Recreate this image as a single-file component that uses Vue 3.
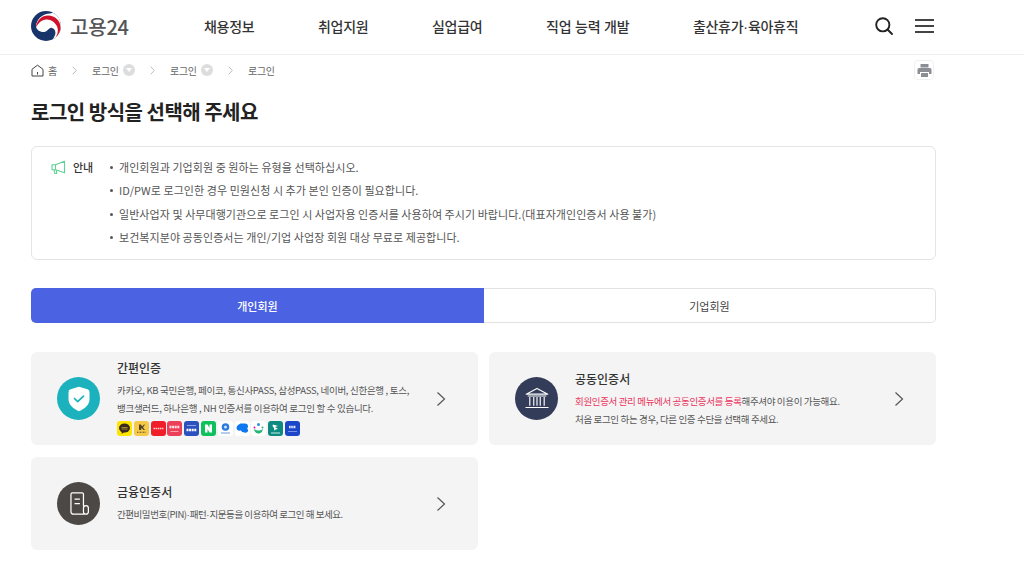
<script setup>
const nav = ['채용정보', '취업지원', '실업급여', '직업 능력 개발']
const crumbs = ['로그인', '로그인', '로그인']
const notes = [
  '개인회원과 기업회원 중 원하는 유형을 선택하십시오.',
  'ID/PW로 로그인한 경우 민원신청 시 추가 본인 인증이 필요합니다.',
  '일반사업자 및 사무대행기관으로 로그인 시 사업자용 인증서를 사용하여 주시기 바랍니다.(대표자개인인증서 사용 불가)',
  '보건복지분야 공동인증서는 개인/기업 사업장 회원 대상 무료로 제공합니다.'
]
</script>

<template>
  <div class="page">
    <header class="top">
      <div class="brand">
        <svg class="logo" viewBox="0 0 30 30" width="30" height="30" aria-hidden="true">
          <circle cx="15" cy="15" r="15" fill="#17356b" />
          <path d="M5 16C5 8 12 2.500 19 2.500l3-.700A15 15 0 0 1 22 28.300L24 24c1-3 0-6-3-7-3-1-4 4-8 4-4 0-7-2-8-5z" fill="#fff" />
          <path d="M5 16.500C5.500 9 11 4.500 17 4.500c7 0 12.500 5 12.500 12 0 4-2 7.500-5 10 2.200-3 3.200-7.500 1.500-11.300C24 11 19.500 7.700 14.500 8.500 10 9.300 7 12.500 5 16.500z" fill="#d0112b" />
        </svg>
        <span class="brand-text">고용24</span>
      </div>
      <nav class="nav">
        <a v-for="item in nav" :key="item">{{ item }}</a>
        <a>출산휴가<span class="dot">·</span>육아휴직</a>
      </nav>
      <div class="top-tools">
        <svg width="20" height="20" viewBox="0 0 20 20" fill="none" stroke="#222" stroke-width="1.900" aria-hidden="true">
          <circle cx="8.800" cy="8.800" r="6.600" />
          <path d="M13.500 13.500 18 18" stroke-linecap="round" />
        </svg>
        <div class="burger"><i></i><i></i><i></i></div>
      </div>
    </header>

    <main class="wrap">
      <div class="crumb-row">
        <div class="crumbs">
          <svg class="home" width="13" height="13" viewBox="0 0 13 13" fill="none" stroke="#444" stroke-width="1" aria-hidden="true">
            <path d="M1 5.300 6.500 1.200 12 5.300V12H1z" stroke-linejoin="round" />
            <path d="M6.500 8v2.500" />
          </svg>
          <span class="c-home">홈</span>
          <template v-for="(c, i) in crumbs" :key="i">
            <svg class="sep" width="5" height="9" viewBox="0 0 5 9" fill="none" stroke="#bbb" stroke-width="1" aria-hidden="true"><path d="M.7.700l3.600 3.800-3.600 3.800" /></svg>
            <span class="c-text">{{ c }}</span>
            <span v-if="i < 2" class="c-drop"><b></b></span>
          </template>
        </div>
        <button class="print" aria-label="인쇄">
          <svg width="15" height="15" viewBox="0 0 15 15" fill="#8b8f94" aria-hidden="true">
            <path d="M3.500 1h8v3.500h-8z" />
            <path d="M2 5h11a1.500 1.500 0 0 1 1.500 1.500V11H12V9H3v2H.5V6.500A1.500 1.500 0 0 1 2 5z" />
            <path d="M4 10h7v4H4z" />
          </svg>
        </button>
      </div>

      <h1 class="title">로그인 방식을 선택해 주세요</h1>

      <section class="notice">
        <div class="notice-head">
          <svg width="15" height="15" viewBox="0 0 15 15" fill="none" stroke="#5fd08f" stroke-width="1.100" aria-hidden="true">
            <path d="M1 4.700h3.500L13.500 1.300v11.400L4.500 9.800H1z" stroke-linejoin="round" />
            <path d="M4.500 4.700v5.100M3 10l.8 3.500h2L5.200 10.200" stroke-linejoin="round" />
          </svg>
          <strong>안내</strong>
        </div>
        <ul class="notes">
          <li v-for="n in notes" :key="n">{{ n }}</li>
        </ul>
      </section>

      <div class="tabs">
        <button class="tab on">개인회원</button>
        <button class="tab">기업회원</button>
      </div>

      <div class="cards">
        <article class="card">
          <div class="disc teal">
            <svg width="22" height="26" viewBox="0 0 22 26" aria-hidden="true">
              <path d="M11 .8 19.500 3.300Q21.500 4 21.500 6v7c0 5.500-4.500 9.800-10.500 12.200C5 22.800.5 18.500.5 13V6Q.5 4 2.500 3.300z" fill="#fff" />
              <path d="M6.500 12.500l3.200 3.200 5.800-5.500" fill="none" stroke="#1cb2bd" stroke-width="1.700" stroke-linecap="round" stroke-linejoin="round" />
            </svg>
          </div>
          <div class="body b-first">
            <h2>간편인증</h2>
            <p>카카오, KB 국민은행, 페이코, 통신사PASS, 삼성PASS, 네이버, 신한은행 , 토스,<br />뱅크샐러드, 하나은행 , NH 인증서를 이용하여 로그인 할 수 있습니다.</p>
            <div class="badges">
              <svg viewBox="0 0 15 15" width="15" height="15" aria-hidden="true"><rect width="15" height="15" rx="3" fill="#fee500" /><ellipse cx="7.500" cy="7" rx="5.500" ry="4.500" fill="#3c2a1e" /><path d="M5 10l-.5 3 3-2z" fill="#3c2a1e" /><path d="M4.500 6.500h6M4.500 8h6" stroke="#b9a33a" stroke-width=".8" /></svg>
              <svg viewBox="0 0 15 15" width="15" height="15" aria-hidden="true"><rect width="15" height="15" rx="3" fill="#f7c948" /><path d="M5 3.500h2l1 2 2-2h1L9 6.500l2 2.500H9.500L7.500 7 7 9H5z" fill="#4f4326" /><path d="M3 11.200h9" stroke="#6a5a2c" stroke-width="1.100" stroke-dasharray="1 .5" /></svg>
              <svg viewBox="0 0 15 15" width="15" height="15" aria-hidden="true"><rect width="15" height="15" rx="3" fill="#f01e28" /><path d="M2.500 7.500h10" stroke="#ffd6d6" stroke-width="1.500" stroke-dasharray="1.500 .6" /></svg>
              <svg viewBox="0 0 15 15" width="15" height="15" aria-hidden="true"><rect width="15" height="15" rx="3" fill="#ee3f58" /><path d="M2.500 6h10" stroke="#ffe3e6" stroke-width="2.600" stroke-dasharray="2 .6" /><path d="M3.500 10.500h8" stroke="#ffb9c3" stroke-width=".8" /></svg>
              <svg viewBox="0 0 15 15" width="15" height="15" aria-hidden="true"><rect width="15" height="15" rx="3" fill="#2c50bd" /><path d="M3 4.500h9" stroke="#a9b9ec" stroke-width=".8" /><path d="M2.500 9h10" stroke="#fff" stroke-width="2.600" stroke-dasharray="2 .6" /></svg>
              <svg viewBox="0 0 15 15" width="15" height="15" aria-hidden="true"><rect width="15" height="15" rx="3" fill="#0fc15d" /><path d="M4 3.500h2.500l2 3.600V3.500H11v8H8.500l-2-3.600v3.600H4z" fill="#fff" /></svg>
              <svg viewBox="0 0 15 15" width="15" height="15" aria-hidden="true"><rect width="15" height="15" rx="3" fill="#fff" /><circle cx="7.500" cy="6" r="3.800" fill="#2a7be0" /><circle cx="7.500" cy="6" r="1.500" fill="#cfe3fa" /><path d="M3 12h9" stroke="#6b9be0" stroke-width="1" /></svg>
              <svg viewBox="0 0 15 15" width="15" height="15" aria-hidden="true"><rect width="15" height="15" rx="3" fill="#fff" /><path d="M5.500 2.500h4.500a3 3 0 0 1 3 3c0 1-.4 1.700-1 2.200.9.400 1.300 1.200 1 2.300-.4 1.400-2 2-3.500 1.500L7 11l-1-1.500C3.500 10 1.500 9 1.500 7 1.500 5 3 4 5.500 2.500z" fill="#0f78f0" /></svg>
              <svg viewBox="0 0 15 15" width="15" height="15" aria-hidden="true"><rect width="15" height="15" rx="3" fill="#fff" /><circle cx="7.500" cy="3.500" r="1.500" fill="#2f8fe6" /><circle cx="3.500" cy="6.500" r="1" fill="#f0a" /><path d="M3 8c.5 3 2.500 4.500 4.500 4.500S11.500 11 12 8c-1.500 1-3 1.500-4.500 1.500S4.500 9 3 8z" fill="#22b573" /><circle cx="11.500" cy="6.500" r="1" fill="#22b573" /></svg>
              <svg viewBox="0 0 15 15" width="15" height="15" aria-hidden="true"><rect width="15" height="15" rx="3" fill="#0f8a80" /><path d="M5 3.500l5 1.500-3 1 3 2-2.500 .5L6.500 10l-.5-3L4.500 5z" fill="#fff" /><path d="M3 12h9" stroke="#c7eee9" stroke-width="1" /></svg>
              <svg viewBox="0 0 15 15" width="15" height="15" aria-hidden="true"><rect width="15" height="15" rx="3" fill="#1b46c8" /><path d="M4 6h7" stroke="#dfe8ff" stroke-width="2.400" stroke-dasharray="1.600 .6" /><path d="M3 10.500h9" stroke="#7e9af0" stroke-width=".9" /></svg>
            </div>
          </div>
          <svg class="chev" width="10" height="16" viewBox="0 0 10 16" fill="none" stroke="#555" stroke-width="1.200" aria-hidden="true"><path d="M1.500 1.500 8.500 8l-7 6.500" /></svg>
        </article>

        <article class="card">
          <div class="disc navy">
            <svg width="26" height="23" viewBox="0 0 36 32" fill="none" stroke="#fff" stroke-width="1.600" aria-hidden="true">
              <path d="M18 2 33 10H3z" stroke-linejoin="round" />
              <path d="M5 12.500h26M8 14v12M13.500 14v12M18 14v12M22.500 14v12M28 14v12M2 28.500h32" />
            </svg>
          </div>
          <div class="body">
            <h2>공동인증서</h2>
            <p class="tight"><em>회원인증서 관리 메뉴에서 공동인증서를 등록</em>해주셔야 이용이 가능해요.<br />처음 로그인 하는 경우, 다른 인증 수단을 선택해 주세요.</p>
          </div>
          <svg class="chev" width="10" height="16" viewBox="0 0 10 16" fill="none" stroke="#555" stroke-width="1.200" aria-hidden="true"><path d="M1.500 1.500 8.500 8l-7 6.500" /></svg>
        </article>

        <article class="card">
          <div class="disc brown">
            <svg width="22" height="25" viewBox="0 0 24 28" fill="none" stroke="#fff" stroke-width="1.400" aria-hidden="true">
              <path d="M17 17V3.500A1.500 1.500 0 0 0 15.500 2h-11A1.500 1.500 0 0 0 3 3.500v20A2.500 2.500 0 0 0 5.500 26H20a2.500 2.500 0 0 0 2.500-2.500V19a2.500 2.500 0 0 0-5.500 0v4.500a2.500 2.500 0 0 0 2.500 2.500" />
              <path d="M7 9h6M7 14h6" />
            </svg>
          </div>
          <div class="body">
            <h2>금융인증서</h2>
            <p class="tighter">간편비밀번호(PIN)<span class="dot">·</span>패턴<span class="dot">·</span>지문등을 이용하여 로그인 해 보세요.</p>
          </div>
          <svg class="chev" width="10" height="16" viewBox="0 0 10 16" fill="none" stroke="#555" stroke-width="1.200" aria-hidden="true"><path d="M1.500 1.500 8.500 8l-7 6.500" /></svg>
        </article>
      </div>
    </main>
  </div>
</template>

<style>
html, body { background: #fff; }
</style>

<style scoped>
.page {
  width: 1024px;
  height: 566px;
  overflow: hidden;
  font-family: "Noto Sans CJK KR", "Noto Sans", sans-serif;
  color: #222;
}
.top {
  height: 54px;
  border-bottom: 1px solid #eee;
  display: flex;
  align-items: center;
  padding-left: 31px;
  box-sizing: content-box;
}
.brand { display: flex; align-items: center; width: 173px; flex: none; gap: 9px; margin-bottom: 2px; }
.brand-text { font-size: 20px; font-weight: 500; color: #555; letter-spacing: -.2px; }
.dot { font-family: "Liberation Sans", sans-serif; letter-spacing: 0; }
.nav { display: flex; gap: 63.700px; font-size: 14px; font-weight: 500; color: #333; width: 662px; flex: none; letter-spacing: -.3px; word-spacing: 1px; margin-bottom: 3px; white-space: nowrap; }
.top-tools { display: flex; align-items: center; gap: 21px; margin-left: 8px; margin-bottom: 2px; }
.burger { width: 19px; display: flex; flex-direction: column; gap: 4px; }
.burger i { display: block; height: 2px; background: #444; }
.wrap { width: 905px; margin-left: 31px; }
.crumb-row { height: 30px; display: flex; align-items: center; justify-content: space-between; }
.crumbs { display: flex; align-items: center; font-size: 10px; color: #666; white-space: nowrap; }
.c-home { margin-left: 4px; width: 9px; }
.sep { margin: 0 15px; }
.c-text { width: 26px; letter-spacing: -.3px; }
.c-drop { width: 12px; height: 12px; border-radius: 50%; background: #ddd; display: flex; align-items: center; justify-content: center; margin-left: 5px; }
.c-drop b { width: 0; height: 0; border: 3px solid transparent; border-top: 4px solid #fff; border-bottom: 0; }
.print { width: 20px; height: 20px; padding: 0; border: 1px solid #f0f0f0; border-radius: 4px; background: #fff; display: flex; align-items: center; justify-content: center; margin-right: 2px; }
.title { margin: 13px 0 18px; font-size: 20px; line-height: 28px; font-weight: 700; color: #222; letter-spacing: -.5px; padding-bottom: 2px; }
.notice {
  height: 114px;
  box-sizing: border-box;
  border: 1px solid #e4e4e4;
  border-radius: 6px;
  padding: 9px 0 0 19px;
  display: flex;
}
.notice-head { width: 58px; flex: none; display: flex; align-items: flex-start; gap: 7px; font-size: 11px; line-height: 22px; color: #333; }
.notice-head svg { margin-top: 4px; }
.notice-head strong { font-weight: 500; }
.notes { margin: 0; padding: 0; list-style: none; font-size: 11px; line-height: 23.300px; color: #555; letter-spacing: .06px; }
.notes li { padding-left: 10px; position: relative; }
.notes li::before { content: ""; position: absolute; left: 1px; top: 10px; width: 3px; height: 3px; border-radius: 50%; background: #555; }
.tabs { display: flex; margin-top: 28px; height: 35px; }
.tab { flex: 1; padding: 0; font: inherit; font-size: 11px; color: #444; background: #fff; border: 1px solid #e2e2e2; border-left: 0; border-radius: 0 5px 5px 0; }
.tab.on { flex: none; width: 453px; background: #4b63e2; border: 0; color: #fff; font-weight: 500; border-radius: 5px 0 0 5px; }
.cards { margin-top: 29px; display: grid; grid-template-columns: 447px 447px; column-gap: 11px; row-gap: 12px; }
.card { height: 93px; background: #f4f4f4; border-radius: 6px; display: flex; align-items: center; padding: 0 32px 0 26px; box-sizing: border-box; }
.disc { width: 43px; height: 43px; border-radius: 50%; flex: none; display: flex; align-items: center; justify-content: center; }
.teal { background: #1cb2bd; }
.navy { background: #333c58; }
.brown { background: #4c4846; }
.body { flex: 1; margin-left: 17px; min-width: 0; }
.body h2 { margin: 0 0 4px; font-size: 12px; line-height: 18px; font-weight: 500; color: #333; letter-spacing: 0; }
.body p { margin: 0; font-size: 9.500px; line-height: 18px; color: #555; letter-spacing: -.3px; white-space: nowrap; }
.body p.tight { letter-spacing: -.35px; }
.body p.tighter { letter-spacing: -.45px; }
.body p em { font-style: normal; color: #ea3560; }
.b-first { padding-bottom: 2px; }
.badges { display: flex; gap: 1.800px; margin-top: 4px; }
.chev { flex: none; }
</style>
